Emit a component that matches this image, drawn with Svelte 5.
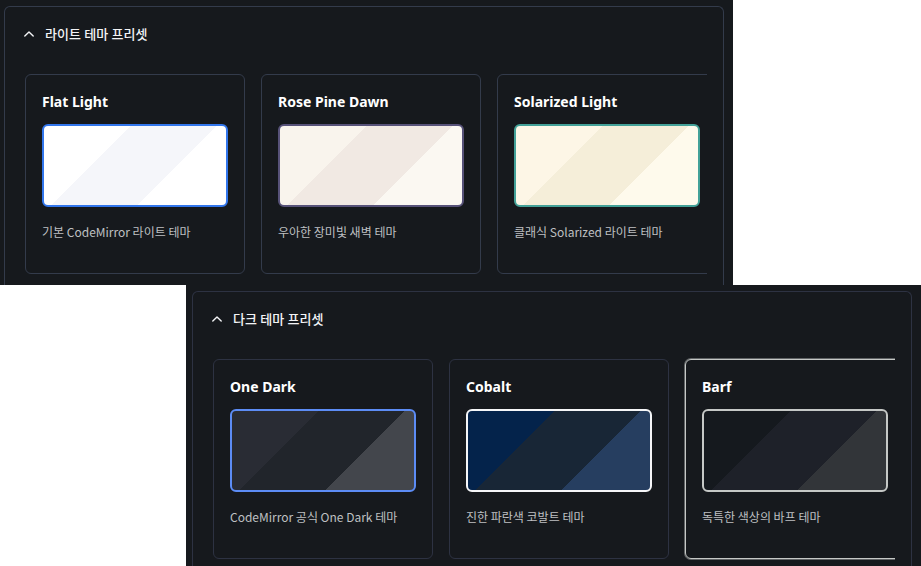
<script lang="ts">
	type Preset = {
		name: string;
		description: string;
		colors: [string, string, string];
		accent: string;
	};

	const groups: { id: string; title: string; presets: Preset[] }[] = [
		{
			id: 'light',
			title: '라이트 테마 프리셋',
			presets: [
				{ name: 'Flat Light', description: '기본 CodeMirror 라이트 테마', colors: ['#ffffff', '#f5f6fa', '#ffffff'], accent: '#3276ec' },
				{ name: 'Rose Pine Dawn', description: '우아한 장미빛 새벽 테마', colors: ['#f9f4ed', '#f1e9e3', '#fbf8f2'], accent: '#575279' },
				{ name: 'Solarized Light', description: '클래식 Solarized 라이트 테마', colors: ['#fdf6e6', '#f5eed9', '#fefaec'], accent: '#43a198' }
			]
		},
		{
			id: 'dark',
			title: '다크 테마 프리셋',
			presets: [
				{ name: 'One Dark', description: 'CodeMirror 공식 One Dark 테마', colors: ['#292c34', '#21252b', '#43464c'], accent: '#5c8cf5' },
				{ name: 'Cobalt', description: '진한 파란색 코발트 테마', colors: ['#04234b', '#182636', '#263e60'], accent: '#f5f6f8' },
				{ name: 'Barf', description: '독특한 색상의 바프 테마', colors: ['#15191e', '#1e2129', '#323539'], accent: '#c5c8c6' }
			]
		}
	];

	let open: Record<string, boolean> = $state({ light: true, dark: true });
	let selected = $state('Barf');
</script>

<main class="page">
	{#each groups as group (group.id)}
		<div class="frame {group.id}">
			<section class="panel">
				<button class="toggle" type="button" aria-expanded={open[group.id]} onclick={() => (open[group.id] = !open[group.id])}>
					<svg class="chevron" class:closed={!open[group.id]} viewBox="0 0 12 12" aria-hidden="true">
						<path d="M1.8 8.1 6 3.9l4.2 4.2" />
					</svg>
					<span>{group.title}</span>
				</button>

				{#if open[group.id]}
					<div class="presets">
						{#each group.presets as preset (preset.name)}
							<button class="card" class:selected={selected === preset.name} type="button" onclick={() => (selected = preset.name)}>
								<span class="name">{preset.name}</span>
								<span
									class="preview"
									style="border-color: {preset.accent}; background-image: linear-gradient(135deg, {preset.colors[0]} 33%, {preset.colors[1]} 33%, {preset.colors[1]} 66%, {preset.colors[2]} 66%)"
								></span>
								<span class="description">{preset.description}</span>
							</button>
						{/each}
					</div>
				{/if}
			</section>
		</div>
	{/each}
</main>

<style>
	:global(body) {
		background: #fff;
	}
	.page {
		display: flex;
		flex-direction: column;
		height: 100vh;
		overflow: hidden;
		font-family: 'Noto Sans', 'Noto Sans CJK KR', sans-serif;
	}
	.frame {
		box-sizing: border-box;
		background: #16191d;
	}
	.light {
		flex: none;
		margin-right: 188px;
		padding: 6px 9px 0 4px;
		--line: #333b4b;
	}
	/* the lower panel runs on past the bottom of the window */
	.dark {
		flex: 1;
		min-height: 0;
		margin-left: 186px;
		padding: 6px 9px 0 6px;
		--line: #2d3242;
	}
	.panel {
		border: 1px solid var(--line);
		border-bottom: none;
		border-radius: 6px 6px 0 0;
		padding: 15px 16px 7px;
	}
	.toggle {
		display: flex;
		align-items: center;
		gap: 10px;
		height: 24px;
		margin-bottom: 24px;
		padding: 0 0 0 2px;
		border: none;
		background: none;
		color: #f3f4f6;
		font: 500 13px/24px 'Noto Sans', 'Noto Sans CJK KR', sans-serif;
		cursor: pointer;
	}
	.chevron {
		width: 12px;
		height: 12px;
		fill: none;
		stroke: #f3f4f6;
		stroke-width: 1.4;
		stroke-linecap: round;
		stroke-linejoin: round;
	}
	.chevron.closed {
		transform: rotate(180deg);
	}
	.presets {
		display: flex;
		gap: 16px;
		padding: 4px;
		overflow: hidden;
	}
	.card {
		box-sizing: border-box;
		display: flex;
		flex-direction: column;
		flex: 0 0 220px;
		min-height: 200px;
		padding: 16px;
		border: 1px solid var(--line);
		border-radius: 6px;
		background: none;
		font-family: inherit;
		text-align: left;
		cursor: pointer;
	}
	.card.selected {
		border-color: #c5c8c6;
		box-shadow: 0 0 0 1px #606365;
	}
	.name {
		margin-bottom: 11px;
		color: #fff;
		font-size: 14px;
		font-weight: 700;
		line-height: 22px;
	}
	.preview {
		box-sizing: border-box;
		height: 83px;
		margin-bottom: 16px;
		border: 2px solid;
		border-radius: 6px;
		background-origin: padding-box;
	}
	.description {
		color: #bfc0c2;
		font-family: 'Noto Sans CJK KR', sans-serif;
		font-size: 12px;
		font-weight: 400;
		line-height: 18px;
	}
</style>
